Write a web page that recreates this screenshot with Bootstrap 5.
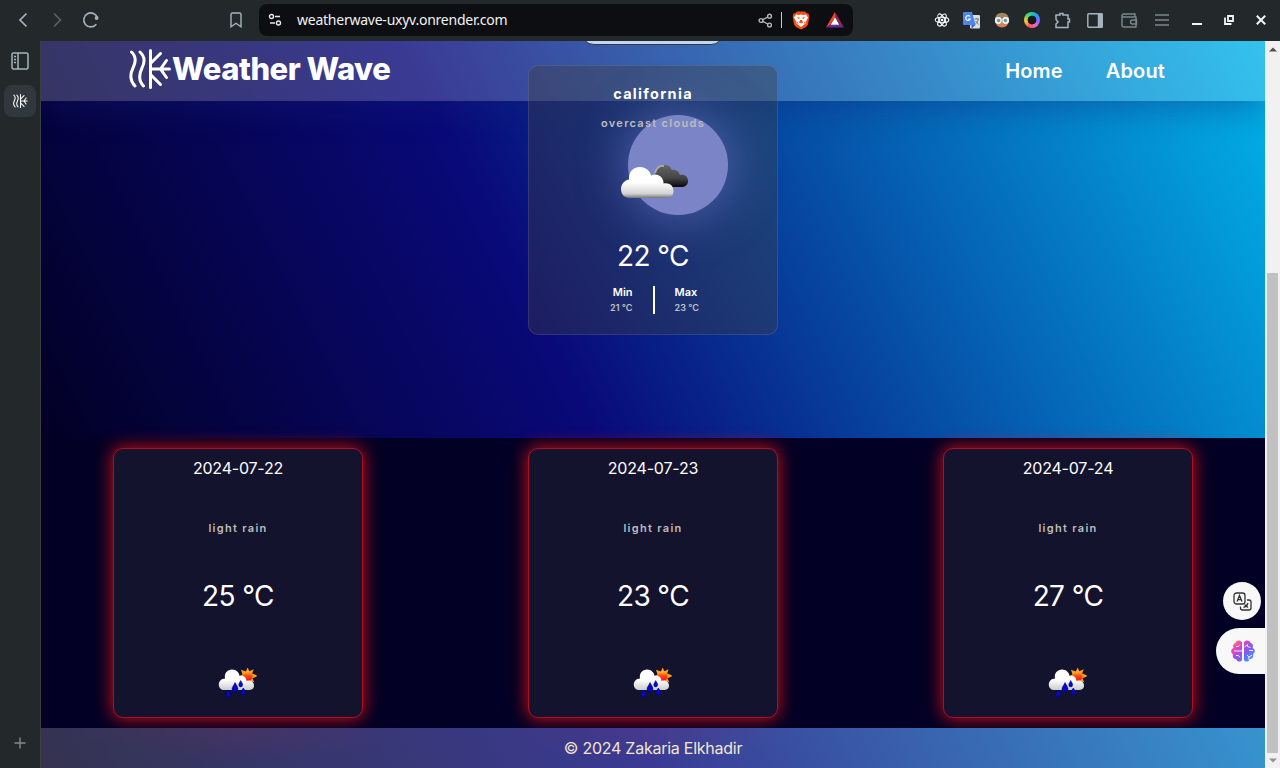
<!DOCTYPE html>
<html lang="en">
<head>
<meta charset="utf-8">
<meta name="viewport" content="width=device-width, initial-scale=1">
<title>Weather Wave</title>
<link href="https://cdn.jsdelivr.net/npm/bootstrap@5.3.0/dist/css/bootstrap.min.css" rel="stylesheet">
<style>
  body { font-family: Inter, Roboto, "Liberation Sans", sans-serif; background: #23282b; height: 768px; width: 1280px; overflow: hidden; line-height: 1; }
  svg { display: block; flex: none; }
  .chrome-bar { height: 41px; background: #23282b; position: relative; }
  .chrome-bar svg { fill: none; stroke: #a3b5bd; stroke-width: 1.4; }
  .url-bar { width: 594px; height: 32px; margin-left: 16px; margin-top: -1px; background: #0d0e12; border-radius: 8px; }
  .url-text { font: 14px "Noto Sans", sans-serif; color: #f1f2f3; letter-spacing: -.24px; line-height: 20px; }
  .side-rail { width: 41px; background: #23282b; border-right: 1px solid #3d4043; }
  .side-tab { width: 32px; height: 32px; border-radius: 8px; background: #30383d; }
  .web-page { width: 1224px; height: 727px; position: relative; }
  .hero { height: 397px; background: linear-gradient(63.5deg, #020024 0%, #090979 35%, #00d4ff 100%) left bottom / 100% 727px no-repeat; }
  .glass-nav { height: 60px; background: rgba(255,255,255,.2); box-shadow: 0 8px 32px 0 rgba(20,30,110,.37); padding: 0 100px 0 88px; position: relative; overflow: visible; }
  .brand-name { font-size: 31px; font-weight: 800; letter-spacing: -.5px; color: #fff; margin-top: -1px; }
  .menu-link { font-size: 20px; font-weight: 600; letter-spacing: .15px; color: #fff; text-decoration: none; }
  .search-clip { position: absolute; left: 540px; top: 0; width: 144px; height: 5px; overflow: hidden; }
  .search-pill { position: absolute; left: 0; bottom: 1px; width: 143px; height: 30px; border-radius: 13px; border: 1px solid #343b46; background: #c3d5ef; }
  .weather-box { width: 250px; height: 270px; border-radius: 10px; position: relative; color: #fff; }
  .now-box { margin-top: -36px; background: rgba(62,62,62,.38); border: 1px solid rgba(255,255,255,.1); }
  .sun-disc { position: absolute; left: 99px; top: 49px; width: 100px; height: 100px; border-radius: 50%; background: #7b84c7; box-shadow: 0 0 50px rgba(123,132,215,.6); }
  .now-box > .layer { position: relative; }
  .city { font-size: 14.5px; font-weight: 700; letter-spacing: 1.3px; height: 16px; margin-top: 21px; }
  .sky { font-size: 11px; font-weight: 600; letter-spacing: 1.3px; color: #bdbdbd; height: 14px; line-height: 14px; }
  .degrees { font-size: 28px; letter-spacing: -.6px; height: 30px; line-height: 30px; }
  .range-name { font-size: 11px; font-weight: 600; height: 12px; line-height: 12px; }
  .range-value { font-size: 9px; font-weight: 600; color: #c0c0c4; margin-top: 5px; height: 10px; line-height: 10px; letter-spacing: .05px; }
  .range-rule { width: 2px; height: 28px; background: #fff; margin: 0 20px; }
  .forecast { height: 290px; background: #020024; padding: 0 72px; position: relative; }
  .day-box { background: #14132d; border: 1px solid #b00d24; box-shadow: 0 0 17px 1px rgba(255,20,15,.75); }
  .day-date { font-size: 16px; letter-spacing: -.2px; height: 20px; line-height: 20px; margin-top: 9px; }
  .foot { height: 40px; background: linear-gradient(rgba(255,255,255,.2), rgba(255,255,255,.2)), linear-gradient(63.5deg, #020024 0%, #090979 35%, #00d4ff 100%) left bottom / 100% 1056px no-repeat; color: #f3e6cf; font-size: 16px; letter-spacing: -.25px; padding-bottom: 1px; position: relative; }
  .red-haze { position: absolute; inset: 0; background: radial-gradient(160px 26px at 197px 4px, rgba(255,30,30,.07), transparent), radial-gradient(160px 26px at 612px 4px, rgba(255,30,30,.06), transparent); }
  .scroll-track { width: 15px; background: #f1f1f1; padding: 6px 2px 5px; }
  .scroll-thumb { width: 11px; height: 480px; background: #c1c1c1; }
  .float-dot { position: absolute; left: 1182px; top: 541px; width: 38px; height: 38px; border-radius: 50%; background: #f8f8f8; }
  .float-tab { position: absolute; right: 0; top: 587px; width: 49px; height: 46px; border-radius: 23px 0 0 23px; background: #f8f8f8; }
</style>
</head>
<body>
<svg width="0" height="0" class="position-absolute">
  <defs>
    <linearGradient id="whiteCloud" x1="0" y1="0" x2="0" y2="1"><stop offset=".5" stop-color="#fff"/><stop offset=".86" stop-color="#d2d2d2"/><stop offset="1" stop-color="#777"/></linearGradient>
    <linearGradient id="rainCloud" x1="0" y1="0" x2="0" y2="1"><stop offset=".5" stop-color="#fff"/><stop offset="1" stop-color="#ccc"/></linearGradient>
    <linearGradient id="darkCloud" x1="0" y1="0" x2="0" y2="1"><stop offset="0" stop-color="#666"/><stop offset=".6" stop-color="#444"/><stop offset="1" stop-color="#080808"/></linearGradient>
    <linearGradient id="sunFill" x1="0" y1="0" x2="0" y2="1"><stop offset="0" stop-color="#ffc02e"/><stop offset=".45" stop-color="#ff4a14"/><stop offset="1" stop-color="#f80c0c"/></linearGradient>
    <linearGradient id="brainFill" x1="0" y1="0" x2="1" y2="1"><stop offset="0" stop-color="#ff9a2e"/><stop offset=".3" stop-color="#e63fc6"/><stop offset=".6" stop-color="#7a5cf5"/><stop offset="1" stop-color="#27b5ff"/></linearGradient>
  </defs>
  <symbol id="wave" viewBox="0 0 42 40"><g fill="none" stroke="currentColor" stroke-width="3" stroke-linecap="round" stroke-linejoin="round"><path d="M2 3C6.500 7 6.500 13 3.500 19S0 31 5.500 37M10.500 3C15 7 15.500 13 12.500 19S8.500 31 14 37M21 1.500V38.500M21 14.500L31 4.500M21 25.500L31 35.500M21 20H40M31 20L37 11.500M31 20L37 28.500"/></g></symbol>
  <symbol id="rainy" viewBox="0 0 40 32">
    <path d="M29.700 1.500l1.600 3.800 4.400-2-1.600 4.200 4.600 1.700v1.400l-4.300 1.600 2 4.200-4.200-1.600-2.500 4-2.500-4-4.200 1.200 1.500-4.200-3.500-1.600 3.500-1.700-1.500-4.700 4.800 1.800z" fill="#ffa222"/><circle cx="29.700" cy="10.300" r="4.900" fill="url(#sunFill)"/>
    <path d="M6.500 24C3 24 .8 21.500.8 18.400S3.500 12.500 7 12.500C6 7 9.500 3.500 14 3.500s7.500 3.500 7.500 6.500c4-1 7 1.500 7 5 4-1.500 7.500 1 7.500 4.500s-2.500 4.500-5.500 4.500z" fill="url(#rainCloud)"/>
    <g fill="#0509c6" stroke="#02035b" stroke-width=".5"><path d="M17 16.500c2 3.500 3 4.500 3 6.500a3 3 0 0 1-6 0c0-2 1.500-3 3-6.500zM22.700 14.500c1.200 2.300 1.900 3 1.900 4.500a1.900 1.900 0 0 1-3.800 0c0-1.500.8-2.200 1.900-4.500zM10.300 24c1.700 2.500 2.500 3 2.500 4.500a2.500 2.500 0 0 1-5 0c0-1.500 1-2 2.500-4.500zM25.300 22c1.700 2.500 2.500 3 2.500 4.500a2.500 2.500 0 0 1-5 0c0-1.500 1-2 2.500-4.500z"/></g>
  </symbol>
</svg>

<header class="chrome-bar d-flex align-items-center">
  <svg width="16" height="16" viewBox="0 0 16 16" style="margin-left:16px;margin-top:-1px"><path d="M10.500 1.500L4 8l6.500 6.500" stroke-width="1.700"/></svg>
  <svg width="16" height="16" viewBox="0 0 16 16" style="margin-left:16px;margin-top:-1px"><path d="M6 1.500L12.500 8 6 14.500" style="stroke:#5a6267;stroke-width:1.700"/></svg>
  <svg width="18" height="18" viewBox="0 0 18 18" style="margin-left:18px;margin-top:-1px"><path d="M14.300 13.200A7 7 0 1 1 15.500 7" stroke-width="1.600"/><circle cx="14.600" cy="7" r="1.900" style="fill:#a3b5bd;stroke:none"/></svg>
  <svg width="14" height="16" viewBox="0 0 14 16" style="margin-left:129px;margin-top:-1px"><path d="M2 2.500Q2 1 3.500 1h7Q12 1 12 2.500V14.800L7 11.300 2 14.800z"/></svg>
  <div class="url-bar d-flex align-items-center">
    <svg width="14" height="14" viewBox="0 0 14 14" style="margin-left:9px"><g style="stroke:#e8e8e8"><circle cx="3.500" cy="3.500" r="2"/><circle cx="10.500" cy="10" r="2"/><path d="M7 3.500h5M2 10h5" stroke-width="1.600"/></g></svg>
    <span class="url-text" style="margin-left:15px">weatherwave-uxyv.onrender.com</span>
    <svg class="ms-auto" width="15" height="15" viewBox="0 0 15 15"><g style="stroke:#b6b9bc"><circle cx="3" cy="7.500" r="1.900"/><circle cx="11.500" cy="3.200" r="1.900"/><circle cx="11.500" cy="12" r="1.900"/><path d="M4.800 6.600L9.800 4M4.800 8.400L9.800 11"/></g></svg>
    <span style="width:1px;height:16px;background:#c6c9cb;margin-left:8px"></span>
    <svg width="18" height="19" viewBox="0 0 18 19" style="margin-left:10px"><g style="stroke:none"><path d="M5 .5h8l1.800 1.800 1.700.3.800 3-1.300 8-2 2.500L9 18.600 4 16.100 2 13.600.7 5.600l.8-3 1.700-.3z" fill="#fb4b10"/><path d="M4 3.500l3 .5 2-.5 2 .5 3-.5 2 3-2 4-.5 2L9 16l-4.500-3.500-.5-2-2-4z" fill="#fff"/><path d="M4.500 6l3.200.8-.6 1.500zM13.500 6l-3.200.8.6 1.500zM8 9h2l1 2.500-2 1-2-1zM5 10l1.500 3L4.700 12zM13 10l-1.500 3 1.800-1z" fill="#fb4b10"/></g></svg>
    <svg width="18" height="16" viewBox="0 0 18 16" style="margin-left:16px;margin-right:9px"><g style="stroke:none"><path d="M9 0L0 15.500l4-2.500L9 5z" fill="#ff4724"/><path d="M9 0l9 15.500-4-2.500L9 5z" fill="#9e1f63"/><path d="M0 15.500h18L14 12.500H4z" fill="#662d91"/><path d="M9 5.200l4.300 7.600H4.700z" fill="#fff"/></g></svg>
  </div>
  <div class="d-flex align-items-center" style="margin-left:81px;margin-top:-1px">
    <svg width="16" height="16" viewBox="0 0 16 16"><g style="fill:none;stroke:#fff;stroke-width:1.100"><ellipse cx="8" cy="8" rx="6.800" ry="2.700"/><ellipse cx="8" cy="8" rx="6.800" ry="2.700" transform="rotate(60 8 8)"/><ellipse cx="8" cy="8" rx="6.800" ry="2.700" transform="rotate(120 8 8)"/></g><circle cx="8" cy="8" r="1.300" style="fill:#fff;stroke:none"/></svg>
    <svg width="17" height="17" viewBox="0 0 17 17" style="margin-left:13px"><g style="stroke:none"><rect x="7" y="3" width="10" height="13.500" rx="1" fill="#dcdcdc"/><path d="M1 0h8l3.500 13H1q-1 0-1-1V1q0-1 1-1z" fill="#4a86ee"/><path d="M8.500 16.500V13h4z" fill="#2e62c8"/></g><path d="M7 4.500A2.400 2.400 0 1 0 7.300 7H5" style="stroke:#fff;stroke-width:1.200"/><path d="M11.500 7h4.500M13.700 6v1M15.300 7c-.5 2.500-1.500 4-3 5M12.500 9l3 3.500" style="stroke:#747b80;stroke-width:1"/></svg>
    <svg width="16" height="16" viewBox="0 0 16 16" style="margin-left:14px"><g style="stroke:none"><circle cx="8" cy="8.500" r="7" fill="#d98254"/><path d="M1 7Q2 .8 8 .8T15 7z" fill="#a1855d"/><circle cx="4.300" cy="8.500" r="3.400" fill="#e9f4f7"/><circle cx="11.700" cy="8.500" r="3.400" fill="#e9f4f7"/><circle cx="4.600" cy="8.500" r="1.700" fill="#6f99aa"/><circle cx="11.400" cy="8.500" r="1.700" fill="#6f99aa"/></g></svg>
    <span class="rounded-circle" style="width:16px;height:16px;margin-left:14px;background:radial-gradient(#17181b 36%,transparent 42%),conic-gradient(#19c9b5,#2796ff,#9264ff,#ff64bd,#ff5656,#ffc436,#62d866,#19c9b5)"></span>
    <svg width="17" height="17" viewBox="0 0 17 17" style="margin-left:14px"><path d="M2 3h4V1.500h3V3h5v4h1.500v3H14v5.500H2V12l2-2-2-2.500z" stroke-width="1.500"/></svg>
    <svg width="16" height="15" viewBox="0 0 16 15" style="margin-left:16px"><rect x=".8" y=".8" width="14.400" height="13.400" rx="1"/><path d="M11.500 1h3.500v13h-3.500z" fill="#a3b5bd"/></svg>
    <svg width="17" height="15" viewBox="0 0 17 15" style="margin-left:18px"><g style="stroke:#7b878d"><path d="M14 3.500V1H3Q1 1 1 3v9q0 2 2 2h12V4H3Q1 4 1 2.500"/><path d="M15.500 7h-4a2 2 0 0 0 0 4h4z"/></g></svg>
    <svg width="14" height="12" viewBox="0 0 14 12" style="margin-left:17px"><path d="M0 1h14M0 6h14M0 11h14" stroke-width="1.200"/></svg>
    <svg width="10" height="12" viewBox="0 0 10 12" style="margin-left:23px"><path d="M0 10h10" style="stroke:#f4f4f4;stroke-width:2"/></svg>
    <svg width="10" height="10" viewBox="0 0 10 10" style="margin-left:22px"><path d="M4 1h5v5H4zM1 2.500V9h6.500" style="stroke:#f4f4f4;stroke-width:1.800"/></svg>
    <svg width="10" height="10" viewBox="0 0 10 10" style="margin-left:22px"><path d="M.8.8l8.400 8.400M9.200.8L.8 9.200" style="stroke:#f4f4f4;stroke-width:2"/></svg>
  </div>
</header>

<div class="d-flex">
  <aside class="side-rail d-flex flex-column align-items-center flex-shrink-0">
    <svg width="18" height="18" viewBox="0 0 18 18" style="margin-top:11px"><g fill="none" stroke="#a3b5bd" stroke-width="1.500"><rect x="1" y="1" width="16" height="16" rx="1.500"/><path d="M7 1v16M3 4.500h2M3 7.500h2M3 10.500h2"/></g></svg>
    <div class="side-tab d-flex align-items-center justify-content-center text-white" style="margin-top:15px"><svg width="15" height="14"><use href="#wave"/></svg></div>
    <svg class="mt-auto" width="12" height="12" viewBox="0 0 12 12" style="margin-bottom:19px"><path d="M6 .5v11M.5 6h11" stroke="#828b8f" stroke-width="1.400"/></svg>
  </aside>

  <div class="web-page flex-shrink-0 overflow-hidden">
    <main class="hero">
      <nav class="glass-nav d-flex align-items-center justify-content-between">
        <a class="d-flex align-items-center text-white text-decoration-none" href="#" style="margin-top:-4px"><svg width="43" height="40"><use href="#wave"/></svg><span class="brand-name">Weather Wave</span></a>
        <div class="d-flex" style="gap:43px"><a class="menu-link" href="#">Home</a><a class="menu-link" href="#">About</a></div>
        <div class="search-clip"><div class="search-pill"></div></div>
      </nav>
      <section class="weather-box now-box mx-auto d-flex flex-column align-items-center">
        <div class="sun-disc"></div>
        <div class="layer city">california</div>
        <div class="layer sky" style="margin-top:13px">overcast clouds</div>
        <svg class="layer" width="70" height="42" viewBox="0 0 70 42" style="margin-top:30px;margin-left:2px">
          <path d="M38 26C34 22 35 16 37 12 38 6 43 4 46 5c4 0 6 3 7 5 4-1 7 2 8 5 5-1 8 2 8 6s-3 6-7 6H42z" fill="url(#darkCloud)"/><path d="M36 13c1-5 5-8 9-7" fill="none" stroke="#aaa" stroke-width="2"/>
          <path d="M11 38C5 38 2 34 2 29s4-9 8-9.500C9.500 11 15 7 21 7s10.500 4.500 11 8.500c6-3 13 1.500 12.500 8 6-1 10 2 10 7.500s-4 7-9 7z" fill="url(#whiteCloud)"/>
        </svg>
        <div class="layer degrees" style="margin-top:39px">22 °C</div>
        <div class="layer d-flex align-items-center" style="margin-top:15px;margin-left:3px">
          <div class="text-end" style="margin-top:-1px"><div class="range-name">Min</div><div class="range-value">21 °C</div></div>
          <div class="range-rule"></div>
          <div style="margin-top:-1px"><div class="range-name">Max</div><div class="range-value">23 °C</div></div>
        </div>
      </section>
    </main>

    <section class="forecast d-flex align-items-center justify-content-between">
      <article class="weather-box day-box d-flex flex-column align-items-center">
        <div class="day-date">2024-07-22</div><div class="sky" style="margin-top:43px">light rain</div><div class="degrees" style="margin-top:46px">25 °C</div><svg width="40" height="32" style="margin-top:55px"><use href="#rainy"/></svg>
      </article>
      <article class="weather-box day-box d-flex flex-column align-items-center">
        <div class="day-date">2024-07-23</div><div class="sky" style="margin-top:43px">light rain</div><div class="degrees" style="margin-top:46px">23 °C</div><svg width="40" height="32" style="margin-top:55px"><use href="#rainy"/></svg>
      </article>
      <article class="weather-box day-box d-flex flex-column align-items-center">
        <div class="day-date">2024-07-24</div><div class="sky" style="margin-top:43px">light rain</div><div class="degrees" style="margin-top:46px">27 °C</div><svg width="40" height="32" style="margin-top:55px"><use href="#rainy"/></svg>
      </article>
    </section>

    <footer class="foot d-flex align-items-center justify-content-center"><div class="red-haze"></div><span class="position-relative">© 2024 Zakaria Elkhadir</span></footer>

    <div class="float-dot d-flex align-items-center justify-content-center">
      <svg width="19" height="19" viewBox="0 0 19 19"><g fill="none" stroke="#333" stroke-width="1.300"><rect x="1" y="1" width="11" height="11" rx="2.500"/><path d="M4 9.500L6.500 3.500 9 9.500M5 7.700h3M14 8h2q2 0 2 2V16q0 2-2 2H9.500q-2 0-2-2v-1.500M10.500 15.500q3.500-1 4.500-4.500M11.500 12.500l3.500 3"/></g></svg>
    </div>
    <div class="float-tab d-flex align-items-center">
      <svg width="26" height="24" viewBox="0 0 26 24" style="margin-left:14px"><path d="M12 3C10 .5 6 1 5.500 4 3 4.500 2.500 7 3.500 9 .5 10 .5 14 3 15c-1 3 1 5 3 5 1 3 5 3.500 6 1zM14 3c2-2.500 6-2 6.500 1 2.500.5 3 3 2 5 3 1 3 5 .5 6 1 3-1 5-3 5-1 3-5 3.500-6 1z" fill="url(#brainFill)"/><path d="M4 12h8M6 7.500q3 1 4-2M6 16.500q3-1 4 2M14.500 8l3-2.500M17.500 5.500v2l3 1M17 16l2 2 3-2M19 18v3M19 11.500h4" fill="none" stroke="#f8e9ff" stroke-width="1"/></svg>
    </div>
  </div>

  <div class="scroll-track d-flex flex-column align-items-center flex-shrink-0">
    <svg width="8" height="5" viewBox="0 0 8 5"><path d="M0 4.500h8L4 .5z" fill="#505050"/></svg>
    <div class="scroll-thumb mt-auto"></div>
    <svg width="8" height="5" viewBox="0 0 8 5" style="margin-top:5px"><path d="M0 .5h8l-4 4z" fill="#929292"/></svg>
  </div>
</div>
<script src="https://cdn.jsdelivr.net/npm/bootstrap@5.3.0/dist/js/bootstrap.bundle.min.js"></script>
</body>
</html>
